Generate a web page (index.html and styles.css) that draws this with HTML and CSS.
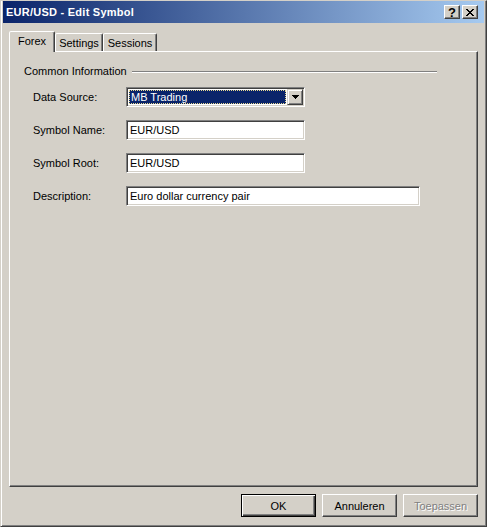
FILE: index.html
```html
<!DOCTYPE html>
<html lang="en">
<head>
    <meta charset="UTF-8">
    <title>EUR/USD - Edit Symbol</title>
    <link rel="stylesheet" href="styles.css">
</head>
<body>
    <div class="window">
        <div class="titlebar">
            <span class="title">EUR/USD - Edit Symbol</span>
            <div class="caption-buttons">
                <button class="caption-btn">?</button>
                <button class="caption-btn">
                    <svg width="8" height="7" viewBox="0 0 8 7" shape-rendering="crispEdges">
                        <path d="M0 0h2v1h-2zM6 0h2v1h-2zM1 1h2v1h-2zM5 1h2v1h-2zM2 2h4v1h-4zM3 3h2v1h-2zM2 4h4v1h-4zM1 5h2v1h-2zM5 5h2v1h-2zM0 6h2v1h-2zM6 6h2v1h-2z" fill="#000"/>
                    </svg>
                </button>
            </div>
        </div>

        <div class="dialog">
            <div class="tabs">
                <div class="tab active tab-forex">Forex</div>
                <div class="tab tab-settings">Settings</div>
                <div class="tab tab-sessions">Sessions</div>
            </div>

            <div class="panel">
                <div class="group-head">
                    <span>Common Information</span>
                    <span class="rule"></span>
                </div>
                <div class="fields">
                    <div class="field">
                        <label>Data Source:</label>
                        <div class="combo">
                            <span class="combo-value">MB Trading</span>
                            <span class="combo-btn">
                                <svg width="7" height="4" viewBox="0 0 7 4" shape-rendering="crispEdges">
                                    <path d="M0 0h7v1h-7zM1 1h5v1h-5zM2 2h3v1h-3zM3 3h1v1h-1z" fill="#000"/>
                                </svg>
                            </span>
                        </div>
                    </div>
                    <div class="field">
                        <label>Symbol Name:</label>
                        <div class="input">EUR/USD</div>
                    </div>
                    <div class="field">
                        <label>Symbol Root:</label>
                        <div class="input">EUR/USD</div>
                    </div>
                    <div class="field">
                        <label>Description:</label>
                        <div class="input wide">Euro dollar currency pair</div>
                    </div>
                </div>
            </div>

            <div class="actions">
                <button class="btn default">OK</button>
                <button class="btn">Annuleren</button>
                <button class="btn" disabled>Toepassen</button>
            </div>
        </div>
    </div>
</body>
</html>
```

FILE: styles.css
```css
:root {
    --face: #d4d0c8;
    --shadow: #808080;
    --dark: #404040;
    --light: #ffffff;
    --select: #0a246a;
    --font-main: 'Liberation Sans', Arial, sans-serif;
}
* {
    box-sizing: border-box;
}
body {
    margin: 0;
    background: var(--face);
    font-family: var(--font-main);
    font-size: 11px;
    color: #000;
}
button {
    font: inherit;
    color: #000;
    padding: 0;
    cursor: default;
}

/* window frame */
.window {
    width: 487px;
    height: 527px;
    display: flex;
    flex-direction: column;
    background: var(--face);
    border: 1px solid;
    border-color: var(--face) var(--dark) var(--dark) var(--face);
    box-shadow: inset 1px 0 var(--light), inset -1px -1px var(--shadow);
    padding: 0 2px 1px 2px;
}
.titlebar {
    flex: none;
    height: 22px;
    display: flex;
    align-items: center;
    justify-content: space-between;
    padding: 0 6px 0 3px;
    background: linear-gradient(to right, #0a246a, #a6caf0);
    color: #fff;
    font-weight: bold;
}
.title {
    letter-spacing: 0.25px;
}
.caption-buttons {
    display: flex;
    gap: 2px;
}
.caption-btn {
    width: 16px;
    height: 14px;
    display: flex;
    align-items: center;
    justify-content: center;
    background: var(--face);
    border: 1px solid;
    border-color: var(--light) var(--dark) var(--dark) var(--light);
    box-shadow: inset -1px -1px var(--shadow);
    font-weight: bold;
    font-size: 13px;
    line-height: 1;
}

/* dialog body */
.dialog {
    flex: 1;
    display: flex;
    flex-direction: column;
    padding: 8px 6px 0 6px;
}
.tabs {
    display: flex;
    align-items: flex-end;
    height: 20px;
    position: relative;
    z-index: 1;
}
.tab {
    height: 18px;
    display: flex;
    align-items: center;
    justify-content: center;
    border: 1px solid;
    border-bottom: none;
    border-color: var(--light) var(--dark) transparent var(--light);
    box-shadow: inset -1px 0 var(--shadow);
    border-radius: 2px 2px 0 0;
    background: var(--face);
}
.tab.active {
    height: 21px;
    margin-bottom: -1px;
    padding-bottom: 2px;
}
.tab-forex { width: 46px; }
.tab-settings { width: 48px; }
.tab-sessions { width: 54px; }

.panel {
    height: 436px;
    border: 1px solid;
    border-color: var(--light) var(--dark) var(--dark) var(--light);
    box-shadow: inset -1px -1px var(--shadow);
    padding: 13px 0 0 14px;
}
.group-head {
    display: flex;
    align-items: center;
    width: 413px;
    height: 13px;
    line-height: 13px;
}
.rule {
    flex: 1;
    height: 2px;
    margin-left: 5px;
    border-top: 1px solid var(--shadow);
    border-bottom: 1px solid var(--light);
}
.fields {
    display: flex;
    flex-direction: column;
    gap: 13px;
    margin-top: 9px;
    padding-left: 9px;
}
.field {
    display: flex;
    align-items: center;
    height: 20px;
}
.field label {
    width: 93px;
}

/* sunken controls */
.input,
.combo {
    width: 179px;
    height: 20px;
    background: #fff;
    border: 1px solid;
    border-color: var(--shadow) var(--light) var(--light) var(--shadow);
    box-shadow: inset 1px 1px var(--dark), inset -1px -1px var(--face);
}
.input {
    display: flex;
    align-items: center;
    padding: 0 3px;
}
.input.wide {
    width: 294px;
}
.combo {
    display: flex;
    padding: 1px;
}
.combo-value {
    flex: 1;
    margin: 1px;
    padding-left: 1px;
    display: flex;
    align-items: center;
    background: var(--select);
    color: #fff;
    border: 1px dotted #e8d890;
}
.combo-btn {
    width: 16px;
    height: 16px;
    display: flex;
    align-items: center;
    justify-content: center;
    background: var(--face);
    border: 1px solid;
    border-color: var(--face) var(--dark) var(--dark) var(--face);
    box-shadow: inset 1px 1px var(--light), inset -1px -1px var(--shadow);
}

/* push buttons */
.actions {
    display: flex;
    justify-content: flex-end;
    gap: 6px;
    margin-top: 7px;
}
.btn {
    width: 75px;
    height: 23px;
    background: var(--face);
    border: 1px solid;
    border-color: var(--light) var(--dark) var(--dark) var(--light);
    box-shadow: inset -1px -1px var(--shadow);
}
.btn.default {
    border-color: #000;
    box-shadow: inset 1px 1px var(--light), inset -1px -1px var(--dark), inset -2px -2px var(--shadow);
}
.btn:disabled {
    color: var(--shadow);
    text-shadow: 1px 1px var(--light);
}
```
